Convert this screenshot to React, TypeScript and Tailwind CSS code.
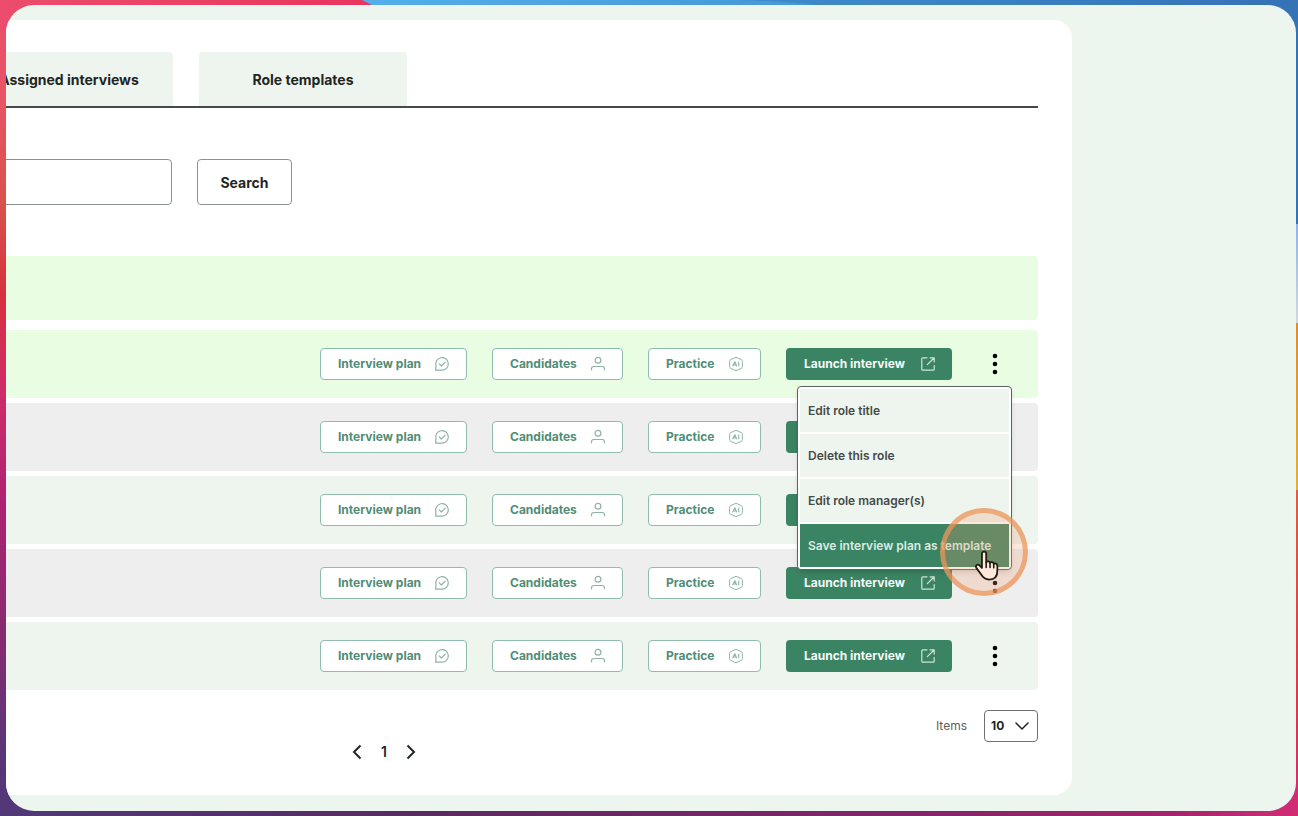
import { useState } from 'react';
import { ChevronDown } from 'lucide-react';
import { clsx } from 'clsx';

const roles = [
  { id: 1, color: 'bg-[#e8fde2]' },
  { id: 2, color: 'bg-[#eeeeee]' },
  { id: 3, color: 'bg-[#edf5ee]' },
  { id: 4, color: 'bg-[#eeeeee]' },
  { id: 5, color: 'bg-[#edf5ee]' },
];

const menuItems = ['Edit role title', 'Delete this role', 'Edit role manager(s)', 'Save interview plan as template'];

const PlanIcon = () => (
  <svg className="size-4" viewBox="0 0 16 16" fill="none" stroke="currentColor" strokeWidth="1.2" strokeLinecap="round" strokeLinejoin="round" aria-hidden="true">
    <path d="M1.7 14.2l.3-4.4A6.3 6.3 0 1 1 8 14.2z" />
    <path d="M5.2 7.8l2.2 2.2 3.8-3.8" />
  </svg>
);

const PersonIcon = () => (
  <svg className="size-4" viewBox="0 0 16 16" fill="none" stroke="currentColor" strokeWidth="1.2" strokeLinecap="round" aria-hidden="true">
    <circle cx="8" cy="4.3" r="2.9" />
    <path d="M1.5 13.8v-1c0-1.4 1-2.3 2.3-2.3h8.4c1.3 0 2.3.9 2.3 2.3v1" />
  </svg>
);

const AiIcon = () => (
  <svg className="size-4" viewBox="0 0 16 16" fill="none" stroke="currentColor" strokeLinejoin="round" aria-hidden="true">
    <path d="M7 1.7q1-.5 2 0l4.4 2q1 .5 1 1.600v5.400q0 1.100-1 1.600l-4.400 2q-1 .5-2 0l-4.400-2q-1-.5-1-1.600V5.300q0-1.100 1-1.600z" />
    <path d="M4.600 10.200L6.900 5.800l1.800 4.400M5.400 9h2.800M10.700 5.800v4.400" strokeWidth="1.100" />
  </svg>
);

const LaunchIcon = () => (
  <svg className="size-4" viewBox="0 0 16 16" fill="none" stroke="currentColor" strokeWidth="1.2" strokeLinecap="round" strokeLinejoin="round" aria-hidden="true">
    <path d="M7 1.800H2.800a1 1 0 0 0-1 1v10.400a1 1 0 0 0 1 1h10.400a1 1 0 0 0 1-1V9.500" />
    <path d="M10 1.800h4.200V6M14 2L7.300 8.700" />
  </svg>
);

const HandCursor = () => (
  <svg className="absolute left-7 top-[37px] h-[34px] w-[30px]" viewBox="0 0 28 32" aria-hidden="true">
    <path
      d="M8.300 3.500c0-2.700 4-2.700 4 0v8.300c.4-1.700 3.300-1.500 3.600.4.700-1.300 3.200-.9 3.500.9.900-1 3.400-.5 3.400 1.700v4.700c0 5-2.600 8.300-7.600 8.300-4.200 0-6-1.900-7.600-4.700L3 16.800c-1.300-2.300 1.500-4 3.200-2.200l2.100 2.300z"
      fill="#ffe9da"
      stroke="#241a14"
      strokeWidth="1.700"
      strokeLinejoin="round"
    />
    <path d="M12.300 12v4.500M15.900 12.500v4M19.400 13.500v3.300" stroke="#241a14" strokeWidth="1.500" strokeLinecap="round" />
  </svg>
);

const Wallpaper = () => (
  <svg className="absolute inset-0 size-full" viewBox="0 0 1298 816" preserveAspectRatio="none" aria-hidden="true">
    <defs>
      <linearGradient id="left" x1="0" y1="0" x2="0" y2="1">
        <stop offset="0" stopColor="#ec4d6c" />
        <stop offset="0.120" stopColor="#e85464" />
        <stop offset="0.260" stopColor="#d8504a" />
        <stop offset="0.360" stopColor="#d8303f" />
        <stop offset="0.480" stopColor="#cf2c68" />
        <stop offset="0.620" stopColor="#ad2371" />
        <stop offset="0.800" stopColor="#812c72" />
        <stop offset="0.920" stopColor="#5a3578" />
        <stop offset="1" stopColor="#503877" />
      </linearGradient>
      <linearGradient id="top" x1="0" y1="0" x2="1" y2="0">
        <stop offset="0" stopColor="#ec4d6c" />
        <stop offset="1" stopColor="#e8335c" />
      </linearGradient>
      <linearGradient id="sky" x1="0" y1="0" x2="1" y2="0">
        <stop offset="0" stopColor="#53aeea" />
        <stop offset="0.600" stopColor="#4093d0" />
        <stop offset="1" stopColor="#3673b8" />
      </linearGradient>
      <linearGradient id="bottom" x1="0" y1="0" x2="1" y2="0">
        <stop offset="0" stopColor="#503877" />
        <stop offset="0.300" stopColor="#592a62" />
        <stop offset="0.700" stopColor="#85246a" />
        <stop offset="0.900" stopColor="#a3246b" />
        <stop offset="1" stopColor="#d12d75" />
      </linearGradient>
      <linearGradient id="haze" x1="0" y1="0" x2="0" y2="1">
        <stop offset="0" stopColor="#91b3e8" />
        <stop offset="1" stopColor="#d2d8da" />
      </linearGradient>
      <linearGradient id="sun" x1="0" y1="0" x2="0" y2="1">
        <stop offset="0" stopColor="#df8c2c" />
        <stop offset="1" stopColor="#deb136" />
      </linearGradient>
      <linearGradient id="ember" x1="0" y1="0" x2="0" y2="1">
        <stop offset="0" stopColor="#df5d42" />
        <stop offset="0.600" stopColor="#dc3a4a" />
        <stop offset="1" stopColor="#cf2d75" />
      </linearGradient>
    </defs>
    <rect width="650" height="816" fill="url(#left)" />
    <rect width="400" height="30" fill="url(#top)" />
    <path d="M362 0h936v224H500L374 6z" fill="url(#sky)" />
    <path d="M740 0h558v224H1100Q1100 10 740 0z" fill="#3470b5" opacity="0.400" />
    <rect x="1200" y="224" width="98" height="99" fill="url(#haze)" />
    <rect x="1200" y="323" width="98" height="167" fill="url(#sun)" />
    <rect x="1200" y="490" width="98" height="326" fill="url(#ember)" />
    <rect x="30" y="790" width="1268" height="26" fill="url(#bottom)" />
  </svg>
);

const outlined =
  'flex h-8 items-center justify-between rounded border border-[#8fbcab] bg-white pr-4 pl-[17px] text-[12px] font-bold text-[#4f8d76]';

const RoleMenu = () => (
  <div className="absolute right-0 top-[38px] z-10 w-[215px] rounded border border-[#5d625f] bg-white p-0.5 shadow-md">
    <ul className="flex flex-col gap-0.5" role="menu">
      {menuItems.map((item, i) => (
        <li key={item} role="none">
          <button
            type="button"
            role="menuitem"
            className={clsx(
              'flex h-[43px] w-full items-center px-2 text-left text-[12px] font-semibold whitespace-nowrap',
              i === menuItems.length - 1 ? 'bg-[#3b8463] text-[#d9ece2]' : 'bg-[#edf5ee] text-[#454b48]'
            )}
          >
            {item}
          </button>
        </li>
      ))}
    </ul>
    <div className="pointer-events-none absolute -right-[17px] -bottom-[27px] size-[88px] rounded-full border-[5px] border-[#ec9458]/70 bg-[#f0a070]/25">
      <HandCursor />
    </div>
  </div>
);

const RoleRow = ({ color, open, onToggle }: { color: string; open: boolean; onToggle: () => void }) => (
  <li className={clsx('flex h-[68px] items-center justify-end gap-[25px] rounded-r pr-[26px]', color)}>
    <button type="button" className={clsx(outlined, 'w-[147px]')}>
      Interview plan
      <span className="text-[#8fb3a6]"><PlanIcon /></span>
    </button>
    <button type="button" className={clsx(outlined, 'w-[131px]')}>
      Candidates
      <span className="text-[#8fb3a6]"><PersonIcon /></span>
    </button>
    <button type="button" className={clsx(outlined, 'w-[113px]')}>
      Practice
      <span className="text-[#8fb3a6]"><AiIcon /></span>
    </button>
    <button type="button" className="flex h-8 w-[166px] items-center justify-between rounded bg-[#3b8463] pr-4 pl-[18px] text-[12px] font-bold text-[#f4faf7]">
      Launch interview
      <span className="text-[#cfe3d9]"><LaunchIcon /></span>
    </button>
    <div className="relative">
      <button type="button" aria-label="More actions" aria-expanded={open} onClick={onToggle} className="flex h-8 w-[35px] items-center justify-center">
        <svg className="h-6 w-2" viewBox="0 0 8 24" aria-hidden="true">
          <circle cx="4" cy="4" r="2.300" />
          <circle cx="4" cy="12" r="2.300" />
          <circle cx="4" cy="20" r="2.300" />
        </svg>
      </button>
      {open && <RoleMenu />}
    </div>
  </li>
);

const App = () => {
  const [openRole, setOpenRole] = useState<number | null>(1);

  return (
    <div className="relative flex min-h-screen overflow-hidden pt-[5px] pr-0.5 pb-[5px] pl-1.5 font-['Inter',sans-serif] text-[#1f2623]">
      <Wallpaper />
      <div className="relative flex min-w-0 flex-1 overflow-hidden rounded-[28px] bg-[#ecf6ee] pt-[15px] pr-56 pb-4">
        <main className="min-w-0 flex-1 rounded-r-[18px] bg-white pt-8 pr-[34px]">
          <nav className="-ml-[41px] flex gap-[26px] border-b-2 border-[#454947]">
            {['Assigned interviews', 'Role templates'].map((tab) => (
              <a key={tab} href="#" className="flex h-[54px] w-[208px] items-center justify-center rounded-t bg-[#eef5ef] text-[14px] font-bold">
                {tab}
              </a>
            ))}
          </nav>

          <form className="mt-[51px] -ml-10 flex gap-[25px]" onSubmit={(e) => e.preventDefault()}>
            <input type="text" aria-label="Search roles" className="h-[46px] w-[206px] rounded border border-[#8b9390] bg-white px-3 text-[14px]" />
            <button type="submit" className="h-[46px] w-[95px] rounded border border-[#8b9390] bg-white text-[14px] font-bold">
              Search
            </button>
          </form>

          <div className="mt-[51px] h-16 rounded-r bg-[#e8fde2]" />
          <ul className="mt-2.5 flex flex-col gap-[5px]">
            {roles.map((role) => (
              <RoleRow
                key={role.id}
                color={role.color}
                open={openRole === role.id}
                onToggle={() => setOpenRole(openRole === role.id ? null : role.id)}
              />
            ))}
          </ul>

          <div className="mt-5 -ml-[276px] grid grid-cols-3">
            <div className="col-start-2 mt-[31px] flex items-center justify-center gap-[14px]">
              <button type="button" aria-label="Previous page" className="flex w-5 justify-center">
                <svg className="h-4 w-3" viewBox="0 0 12 16" fill="none" stroke="currentColor" strokeWidth="2" aria-hidden="true"><path d="M9.500 1.500L3 8l6.500 6.500" /></svg>
              </button>
              <span className="text-[14px] font-semibold">1</span>
              <button type="button" aria-label="Next page" className="flex w-5 justify-center">
                <svg className="h-4 w-3" viewBox="0 0 12 16" fill="none" stroke="currentColor" strokeWidth="2" aria-hidden="true"><path d="M2.500 1.500L9 8l-6.500 6.500" /></svg>
              </button>
            </div>
            <div className="flex items-start justify-end">
              <label htmlFor="items" className="mr-[17px] text-[12px] leading-8 text-[#5b605e]">Items</label>
              <div className="relative">
                <select id="items" defaultValue="10" className="h-8 w-[54px] appearance-none rounded border border-[#6d7270] bg-white pl-1.5 text-[12px] font-bold">
                  <option>10</option>
                  <option>25</option>
                  <option>50</option>
                </select>
                <ChevronDown className="pointer-events-none absolute top-1 right-1 size-6" strokeWidth={1.5} />
              </div>
            </div>
          </div>
        </main>
      </div>
    </div>
  );
};

export default App;
